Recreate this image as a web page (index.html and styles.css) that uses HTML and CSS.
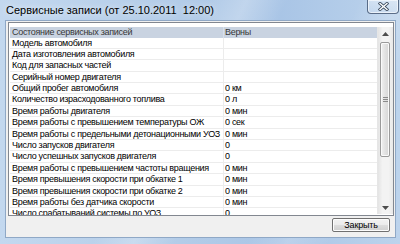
FILE: index.html
```html
<!DOCTYPE html>
<html lang="ru">
<head>
<meta charset="utf-8">
<title>Сервисные записи</title>
<link rel="stylesheet" href="styles.css">
</head>
<body>
<div class="window">
  <div class="titlebar">
    <span class="title">Сервисные записи (от 25.10.2011&nbsp; 12:00)</span>
    <div class="close">
      <svg width="11" height="9" viewBox="0 0 11 9"><path d="M2 1.5 L9 7.5 M9 1.5 L2 7.5" stroke="#3b4a5c" stroke-width="3" stroke-linecap="square"/><path d="M2 1.5 L9 7.5 M9 1.5 L2 7.5" stroke="#ffffff" stroke-width="1.4" stroke-linecap="square"/></svg>
    </div>
  </div>
  <div class="client">
    <div class="list">
      <div class="table">
        <div class="row head"><div class="c1">Состояние сервисных записей</div><div class="c2">Верны</div></div>
        <div class="row"><div class="c1">Модель автомобиля</div><div class="c2"></div></div>
        <div class="row"><div class="c1">Дата изготовления автомобиля</div><div class="c2"></div></div>
        <div class="row"><div class="c1">Код для запасных частей</div><div class="c2"></div></div>
        <div class="row"><div class="c1">Серийный номер двигателя</div><div class="c2"></div></div>
        <div class="row"><div class="c1">Общий пробег автомобиля</div><div class="c2">0 км</div></div>
        <div class="row"><div class="c1">Количество израсходованного топлива</div><div class="c2">0 л</div></div>
        <div class="row"><div class="c1">Время работы двигателя</div><div class="c2">0 мин</div></div>
        <div class="row"><div class="c1">Время работы с превышением температуры ОЖ</div><div class="c2">0 сек</div></div>
        <div class="row"><div class="c1">Время работы с предельными детонационными УОЗ</div><div class="c2">0 мин</div></div>
        <div class="row"><div class="c1">Число запусков двигателя</div><div class="c2">0</div></div>
        <div class="row"><div class="c1">Число успешных запусков двигателя</div><div class="c2">0</div></div>
        <div class="row"><div class="c1">Время работы с превышением частоты вращения</div><div class="c2">0 мин</div></div>
        <div class="row"><div class="c1">Время превышения скорости при обкатке 1</div><div class="c2">0 мин</div></div>
        <div class="row"><div class="c1">Время превышения скорости при обкатке 2</div><div class="c2">0 мин</div></div>
        <div class="row"><div class="c1">Время работы без датчика скорости</div><div class="c2">0 мин</div></div>
        <div class="row"><div class="c1">Число срабатываний системы по УОЗ</div><div class="c2">0</div></div>
      </div>
      <div class="scrollbar">
        <div class="sbtn"><svg width="7" height="4" viewBox="0 0 7 4"><path d="M0 4 L3.5 0 L7 4 Z" fill="#4d4d4d"/></svg></div>
        <div class="track">
          <div class="thumb"><span class="grip"></span></div>
        </div>
        <div class="sbtn"><svg width="7" height="4" viewBox="0 0 7 4"><path d="M0 0 L7 0 L3.5 4 Z" fill="#4d4d4d"/></svg></div>
      </div>
    </div>
    <div class="footer">
      <button class="btn">Закрыть</button>
    </div>
  </div>
</div>
</body>
</html>
```
FILE: styles.css
```css
* { box-sizing: border-box; }
html, body { margin: 0; padding: 0; }
body { width: 400px; height: 244px; overflow: hidden; font-family: "Liberation Sans", Arial, sans-serif; }

.window {
  width: 400px;
  height: 244px;
  display: flex;
  flex-direction: column;
  padding: 0 4px 7px 5px;
  background:
    linear-gradient(115deg, rgba(255,255,255,0) 40%, rgba(255,255,255,0.25) 48%, rgba(255,255,255,0) 56%, rgba(255,255,255,0) 70%, rgba(255,255,255,0.2) 78%, rgba(255,255,255,0) 86%),
    linear-gradient(to right, #c3d8ef 0%, #b3cce8 45%, #a9c5e6 70%, #bcd3ec 100%);
}

.titlebar {
  height: 20px;
  flex: none;
  display: flex;
  align-items: flex-start;
  justify-content: space-between;
}
.title {
  font-size: 11px;
  line-height: 12px;
  margin: 4px 0 0 1px;
  color: #000;
  white-space: pre;
  text-shadow: 0 0 6px rgba(255,255,255,0.9);
}
.close {
  width: 32px;
  height: 14px;
  margin-right: -4px;
  border: 1px solid rgba(50,70,100,0.75);
  border-top: none;
  border-radius: 0 0 4px 4px;
  background: linear-gradient(to bottom, rgba(255,255,255,0.35), rgba(255,255,255,0.1));
  box-shadow: inset 0 0 0 1px rgba(255,255,255,0.6);
  display: flex;
  align-items: center;
  justify-content: center;
  margin-left: auto;
  position: relative;
  left: -1px;
}

.client {
  flex: 1;
  background: #f0f0f0;
  border: 1px solid #8fa8c6;
  display: flex;
  flex-direction: column;
  padding: 1px 1px 5px 2px;
}

.list {
  height: 194px;
  flex: none;
  border: 1px solid #828790;
  background: #fff;
  display: flex;
  padding: 4px 0 0 1px;
}
.table {
  flex: 1;
  overflow: hidden;
  font-size: 9px;
  letter-spacing: -0.3px;
  color: #000;
}
.row {
  display: flex;
  height: 11.4px;
  line-height: 10.4px;
  border-bottom: 1px solid #ececec;
  white-space: nowrap;
}
.row .c1 {
  width: 214px;
  flex: none;
  padding-left: 2px;
  overflow: hidden;
  border-right: 1px solid #ececec;
}
.row .c2 {
  flex: 1;
  padding-left: 1px;
  overflow: hidden;
}
.row.head {
  height: 10.5px;
  line-height: 10.5px;
  background: #c9d3e1;
  color: #383838;
  border-bottom: none;
}
.row.head .c1 { border-right: 1px solid #d9e0ea; }

.scrollbar {
  width: 16px;
  flex: none;
  display: flex;
  flex-direction: column;
  background: linear-gradient(to right, #e4e4e4, #f3f3f3 30%, #f3f3f3 70%, #e8e8e8);
  border-left: 1px solid #e6e6e6;
  margin-bottom: 1px;
}
.sbtn {
  height: 13px;
  flex: none;
  display: flex;
  align-items: center;
  justify-content: center;
}
.track {
  flex: 1;
  padding: 2px 3px 0 2px;
}
.thumb {
  height: 115px;
  border: 1px solid #9a9a9a;
  border-radius: 2px;
  background: linear-gradient(to right, #f1f1f1, #e2e2e2 50%, #d6d6d6);
  box-shadow: inset 0 0 0 1px #fafafa;
  display: flex;
  align-items: center;
  justify-content: center;
}
.grip {
  width: 5px;
  height: 5px;
  background: repeating-linear-gradient(to bottom, #8a8a8a 0, #8a8a8a 1px, transparent 1px, transparent 2px);
}

.footer {
  flex: 1;
  display: flex;
  justify-content: flex-end;
  align-items: flex-start;
  padding: 2px 4px 0 0;
}
.btn {
  width: 58px;
  height: 14px;
  padding: 0;
  font-family: "Liberation Sans", Arial, sans-serif;
  font-size: 9px;
  letter-spacing: -0.2px;
  line-height: 12px;
  color: #000;
  border: 1px solid #707070;
  border-radius: 2px;
  background: linear-gradient(to bottom, #f2f2f2 0%, #ebebeb 50%, #dddddd 51%, #cfcfcf 100%);
  box-shadow: inset 0 0 0 1px #fcfcfc;
}
```
